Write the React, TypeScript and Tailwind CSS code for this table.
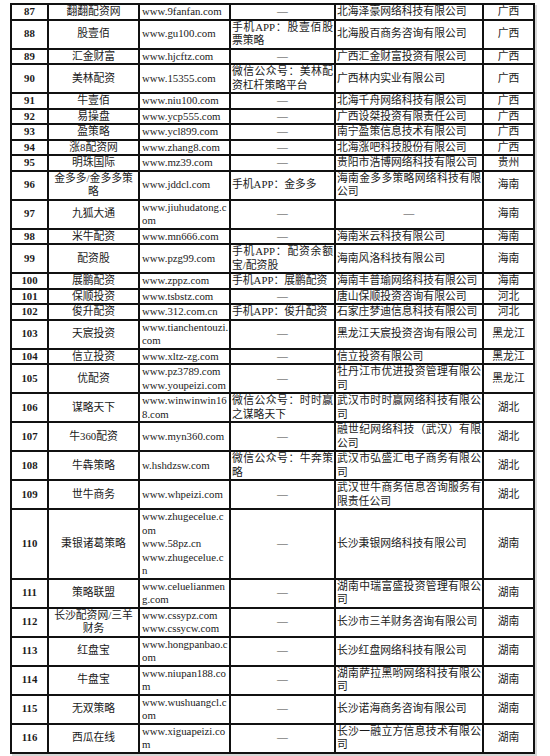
import React from "react";

type Row = [string, string, string, string, string, string];

// 序号, 名称, 网址, 公众号/APP, 运营主体, 地区
const rows: Row[] = [
  ["87", "翻翻配资网", "www.9fanfan.com", "—", "北海泽豪网络科技有限公司", "广西"],
  ["88", "股壹佰", "www.gu100.com", "手机APP：股壹佰股票策略", "北海股百商务咨询有限公司", "广西"],
  ["89", "汇金财富", "www.hjcftz.com", "—", "广西汇金财富投资有限公司", "广西"],
  ["90", "美林配资", "www.15355.com", "微信公众号：美林配资杠杆策略平台", "广西林内实业有限公司", "广西"],
  ["91", "牛壹佰", "www.niu100.com", "—", "北海千舟网络科技有限公司", "广西"],
  ["92", "易操盘", "www.ycp555.com", "—", "广西设桀投资有限责任公司", "广西"],
  ["93", "盈策略", "www.ycl899.com", "—", "南宁盈策信息技术有限公司", "广西"],
  ["94", "涨8配资网", "www.zhang8.com", "—", "北海涨吧科技股份有限公司", "广西"],
  ["95", "明珠国际", "www.mz39.com", "—", "贵阳市浩博网络科技有限公司", "贵州"],
  ["96", "金多多/金多多策\n略", "www.jddcl.com", "手机APP：金多多", "海南金多多策略网络科技有限公司", "海南"],
  ["97", "九狐大通", "www.jiuhudatong.c\nom", "—", "—", "海南"],
  ["98", "米牛配资", "www.mn666.com", "—", "海南米云科技有限公司", "海南"],
  ["99", "配资股", "www.pzg99.com", "手机APP：配资余额宝/配资股", "海南风洛科技有限公司", "海南"],
  ["100", "展鹏配资", "www.zppz.com", "手机APP：展鹏配资", "海南丰普瑜网络科技有限公司", "海南"],
  ["101", "保顺投资", "www.tsbstz.com", "—", "唐山保顺投资咨询有限公司", "河北"],
  ["102", "俊升配资", "www.312.com.cn", "手机APP：俊升配资", "石家庄梦迪信息科技有限公司", "河北"],
  ["103", "天宸投资", "www.tianchentouzi.\ncom", "—", "黑龙江天宸投资咨询有限公司", "黑龙江"],
  ["104", "信立投资", "www.xltz-zg.com", "—", "信立投资有限公司", "黑龙江"],
  ["105", "优配资", "www.pz3789.com\nwww.youpeizi.com", "—", "牡丹江市优进投资管理有限公司", "黑龙江"],
  ["106", "谋略天下", "www.winwinwin16\n8.com", "微信公众号：时时赢之谋略天下", "武汉市时时赢网络科技有限公司", "湖北"],
  ["107", "牛360配资", "www.myn360.com", "—", "融世纪网络科技（武汉）有限公司", "湖北"],
  ["108", "牛犇策略", "w.hshdzsw.com", "微信公众号：牛奔策略", "武汉市弘盛汇电子商务有限公司", "湖北"],
  ["109", "世牛商务", "www.whpeizi.com", "—", "武汉世牛商务信息咨询服务有限责任公司", "湖北"],
  ["110", "秉银诸葛策略", "www.zhugecelue.c\nom\nwww.58pz.cn\nwww.zhugecelue.c\nn", "—", "长沙秉银网络科技有限公司", "湖南"],
  ["111", "策略联盟", "www.celuelianmen\ng.com", "—", "湖南中瑞富盛投资管理有限公司", "湖南"],
  ["112", "长沙配资网/三羊\n财务", "www.cssypz.com\nwww.cssycw.com", "—", "长沙市三羊财务咨询有限公司", "湖南"],
  ["113", "红盘宝", "www.hongpanbao.c\nom", "—", "长沙红盘网络科技有限公司", "湖南"],
  ["114", "牛盘宝", "www.niupan188.co\nm", "—", "湖南萨拉黑哟网络科技有限公司", "湖南"],
  ["115", "无双策略", "www.wushuangcl.c\nom", "—", "长沙诺海商务咨询有限公司", "湖南"],
  ["116", "西瓜在线", "www.xiguapeizi.co\nm", "—", "长沙一融立方信息技术有限公司", "湖南"],
];

const cell = "border-2 border-[#111] p-0 align-middle";

const App = () => {
  return (
    <div className="min-h-screen w-[550px] bg-white pt-[3px] pl-[10px] font-[family-name:'Liberation_Serif','Noto_Sans_CJK_SC',serif] text-[10.8px] leading-[13.5px] text-[#1a1a1a]">
      <table className="w-[523px] table-fixed border-collapse shadow-[2px_2px_0_#d6d6d6]">
        <colgroup>
          <col className="w-[37px]" />
          <col className="w-[91px]" />
          <col className="w-[91px]" />
          <col className="w-[105px]" />
          <col className="w-[148px]" />
          <col className="w-[51px]" />
        </colgroup>
        <tbody>
          {rows.map(([no, name, url, app, company, region]) => (
            <tr key={no}>
              <td className={`${cell} text-center font-bold`}>{no}</td>
              <td className={`${cell} whitespace-pre-line text-center`}>{name}</td>
              <td className={`${cell} whitespace-pre-line break-all pl-[2px]`}>{url}</td>
              {app === "—" ? (
                <td className={`${cell} text-center text-[#444]`}>—</td>
              ) : (
                <td className={`${cell} break-all px-px text-justify`}>{app}</td>
              )}
              {company === "—" ? (
                <td className={`${cell} text-center text-[#444]`}>—</td>
              ) : (
                <td className={`${cell} break-all px-px text-justify`}>{company}</td>
              )}
              <td className={`${cell} text-center`}>{region}</td>
            </tr>
          ))}
        </tbody>
      </table>
    </div>
  );
};

export default App;
